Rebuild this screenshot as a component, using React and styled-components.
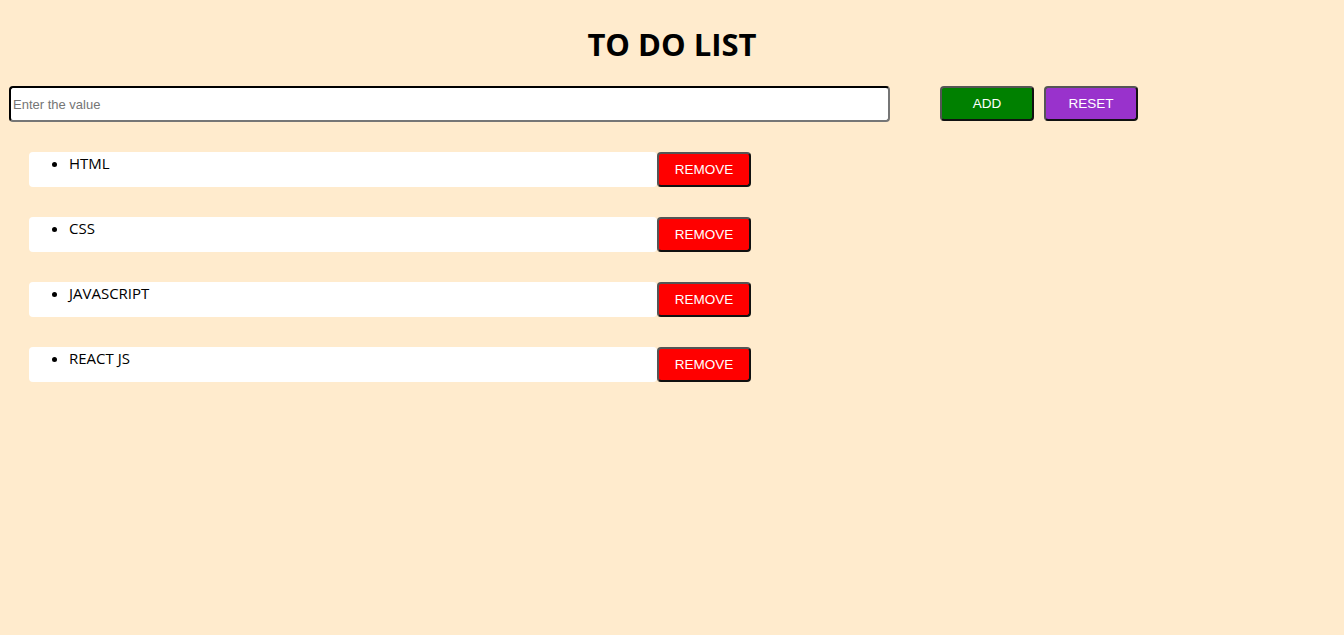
import React from "react";
import styled, { createGlobalStyle } from "styled-components";

const Global = createGlobalStyle`
  html, body { margin: 0; padding: 0; background: #ffebcd; }
  body { font-family: "Open Sans", "Noto Sans", sans-serif; min-height: 635px; }
`;

const Page = styled.div`
  padding-top: 23px;
`;

const Title = styled.h1`
  margin: 0 0 21px;
  text-align: center;
  font-family: "Open Sans", sans-serif;
  font-weight: 700;
  font-size: 31px;
  line-height: 42px;
  color: #000;
`;

const Toolbar = styled.div`
  display: flex;
  align-items: flex-start;
  padding-left: 9px;
`;

const Input = styled.input`
  box-sizing: border-box;
  width: 881px;
  height: 36px;
  margin: 0 50px 0 0;
  padding: 0 2px;
  border: 2px inset #222;
  border-color: #1a1a1a #767676 #767676 #1a1a1a;
  border-radius: 4px;
  background: #fff;
  font-family: "Liberation Sans", Arial, sans-serif;
  font-size: 13px;
  &::placeholder { color: #757575; }
`;

const Button = styled.button`
  box-sizing: border-box;
  width: 94px;
  height: 35px;
  margin-right: ${(p) => p.$mr || 0}px;
  border: 2px solid;
  border-color: #555 #111 #111 #555;
  border-radius: 4px;
  background: ${(p) => p.$bg};
  color: #fff;
  font-family: "Liberation Sans", Arial, sans-serif;
  font-size: 13.5px;
  padding: 0;
  cursor: pointer;
`;

const List = styled.div`
  display: flex;
  flex-direction: column;
  gap: 30px;
  padding: 30px 0 0 29px;
`;

const Row = styled.div`
  display: flex;
  align-items: flex-start;
`;

const Item = styled.ul`
  box-sizing: border-box;
  width: 628px;
  height: 35px;
  margin: 0;
  padding: 0 0 0 40px;
  background: #fff;
  border-radius: 4px;
  li {
    font-size: 15px;
    line-height: 22px;
    color: #000;
  }
`;

const items = ["HTML", "CSS", "JAVASCRIPT", "REACT JS"];

export default function App() {
  return (
    <>
      <Global />
      <Page>
        <Title>TO DO LIST</Title>
        <Toolbar>
          <Input placeholder="Enter the value" />
          <Button $bg="#008000" $mr={10}>ADD</Button>
          <Button $bg="#9932cc">RESET</Button>
        </Toolbar>
        <List>
          {items.map((it) => (
            <Row key={it}>
              <Item>
                <li>{it}</li>
              </Item>
              <Button $bg="#ff0000">REMOVE</Button>
            </Row>
          ))}
        </List>
      </Page>
    </>
  );
}
